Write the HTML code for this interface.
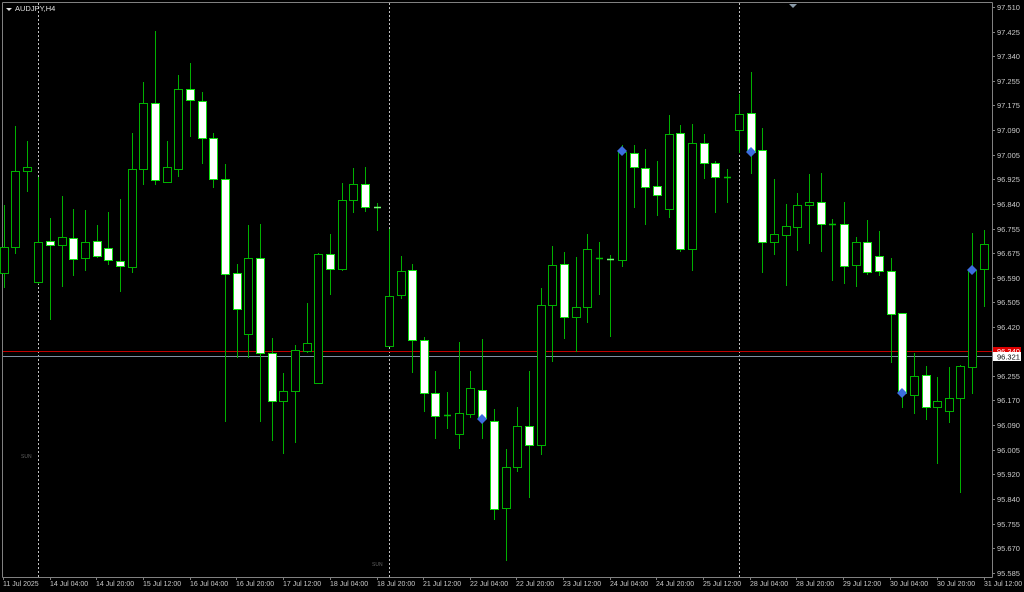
<!DOCTYPE html>
<html><head><meta charset="utf-8"><style>
html,body{margin:0;padding:0;background:#000;width:1024px;height:592px;overflow:hidden}
svg{display:block}
text{font-family:"Liberation Sans",sans-serif;font-size:7.5px;fill:#c8c8c8}
#bt text{font-size:7px}
</style></head><body>
<svg id="s" width="1024" height="592" xmlns="http://www.w3.org/2000/svg">
<rect width="1024" height="592" fill="#000"/>
<g stroke="#808080" stroke-width="1" fill="none">
<line x1="2.5" y1="2.5" x2="992.5" y2="2.5"/>
<line x1="2.5" y1="2.5" x2="2.5" y2="577.5"/>
<line x1="992.5" y1="2.5" x2="992.5" y2="577.5"/>
<line x1="2.5" y1="577.5" x2="992.5" y2="577.5"/>
</g>
<g stroke="#c0c0c0" stroke-width="1" stroke-dasharray="2,2">
<line x1="38.5" y1="3" x2="38.5" y2="577"/>
<line x1="389.5" y1="3" x2="389.5" y2="577"/>
<line x1="739.5" y1="3" x2="739.5" y2="577"/>
</g>
<line x1="3" y1="351.5" x2="992" y2="351.5" stroke="#c00000"/>
<line x1="3" y1="356.5" x2="992" y2="356.5" stroke="#8090a0"/>
<polygon points="789,4 797,4 793,8" fill="#8a9aa8"/>
<polygon points="6,8 12,8 9,11" fill="#e0e0e0"/>
<text x="15" y="11" style="font-size:7.5px;fill:#e0e0e0">AUDJPY,H4</text>
<text x="21" y="458" style="font-size:5px;fill:#606060">SUN</text>
<text x="372" y="566" style="font-size:5px;fill:#606060">SUN</text>
<g id="c"></g>
<g id="ax">
<text x="997" y="10">97.510</text>
<text x="997" y="35">97.425</text>
<text x="997" y="59">97.340</text>
<text x="997" y="84">97.255</text>
<text x="997" y="108">97.175</text>
<text x="997" y="133">97.090</text>
<text x="997" y="158">97.005</text>
<text x="997" y="182">96.925</text>
<text x="997" y="207">96.840</text>
<text x="997" y="232">96.755</text>
<text x="997" y="256">96.675</text>
<text x="997" y="281">96.590</text>
<text x="997" y="305">96.505</text>
<text x="997" y="330">96.420</text>
<text x="997" y="379">96.255</text>
<text x="997" y="403">96.170</text>
<text x="997" y="428">96.090</text>
<text x="997" y="453">96.005</text>
<text x="997" y="477">95.920</text>
<text x="997" y="502">95.840</text>
<text x="997" y="527">95.755</text>
<text x="997" y="551">95.670</text>
<text x="997" y="576">95.585</text>
</g>
<rect x="993" y="347" width="28" height="8" fill="#e00000"/>
<text x="997" y="354" style="fill:#ffffff">96.340</text>
<rect x="993" y="352" width="28" height="9" fill="#ffffff"/>
<text x="997" y="359.5" style="fill:#000">96.321</text>
<g stroke="#808080">
<line x1="992" y1="7.5" x2="995" y2="7.5"/><line x1="992" y1="32.5" x2="995" y2="32.5"/><line x1="992" y1="56.5" x2="995" y2="56.5"/><line x1="992" y1="81.5" x2="995" y2="81.5"/><line x1="992" y1="105.5" x2="995" y2="105.5"/><line x1="992" y1="130.5" x2="995" y2="130.5"/><line x1="992" y1="155.5" x2="995" y2="155.5"/><line x1="992" y1="179.5" x2="995" y2="179.5"/><line x1="992" y1="204.5" x2="995" y2="204.5"/><line x1="992" y1="229.5" x2="995" y2="229.5"/><line x1="992" y1="253.5" x2="995" y2="253.5"/><line x1="992" y1="278.5" x2="995" y2="278.5"/><line x1="992" y1="302.5" x2="995" y2="302.5"/><line x1="992" y1="327.5" x2="995" y2="327.5"/><line x1="992" y1="376.5" x2="995" y2="376.5"/><line x1="992" y1="400.5" x2="995" y2="400.5"/><line x1="992" y1="425.5" x2="995" y2="425.5"/><line x1="992" y1="450.5" x2="995" y2="450.5"/><line x1="992" y1="474.5" x2="995" y2="474.5"/><line x1="992" y1="499.5" x2="995" y2="499.5"/><line x1="992" y1="524.5" x2="995" y2="524.5"/><line x1="992" y1="548.5" x2="995" y2="548.5"/><line x1="992" y1="573.5" x2="995" y2="573.5"/>
</g>
<g id="bt">
<text x="3" y="586">11 Jul 2025</text>
<text x="50" y="586">14 Jul 04:00</text>
<text x="96" y="586">14 Jul 20:00</text>
<text x="143" y="586">15 Jul 12:00</text>
<text x="190" y="586">16 Jul 04:00</text>
<text x="236" y="586">16 Jul 20:00</text>
<text x="283" y="586">17 Jul 12:00</text>
<text x="330" y="586">18 Jul 04:00</text>
<text x="377" y="586">18 Jul 20:00</text>
<text x="423" y="586">21 Jul 12:00</text>
<text x="470" y="586">22 Jul 04:00</text>
<text x="516" y="586">22 Jul 20:00</text>
<text x="563" y="586">23 Jul 12:00</text>
<text x="610" y="586">24 Jul 04:00</text>
<text x="656" y="586">24 Jul 20:00</text>
<text x="703" y="586">25 Jul 12:00</text>
<text x="750" y="586">28 Jul 04:00</text>
<text x="796" y="586">28 Jul 20:00</text>
<text x="843" y="586">29 Jul 12:00</text>
<text x="890" y="586">30 Jul 04:00</text>
<text x="937" y="586">30 Jul 20:00</text>
<text x="984" y="586">31 Jul 12:00</text>
</g>
<g stroke="#808080">
<line x1="3.5" y1="577" x2="3.5" y2="580"/><line x1="50.5" y1="577" x2="50.5" y2="580"/><line x1="96.5" y1="577" x2="96.5" y2="580"/><line x1="143.5" y1="577" x2="143.5" y2="580"/><line x1="190.5" y1="577" x2="190.5" y2="580"/><line x1="236.5" y1="577" x2="236.5" y2="580"/><line x1="283.5" y1="577" x2="283.5" y2="580"/><line x1="330.5" y1="577" x2="330.5" y2="580"/><line x1="377.5" y1="577" x2="377.5" y2="580"/><line x1="423.5" y1="577" x2="423.5" y2="580"/><line x1="470.5" y1="577" x2="470.5" y2="580"/><line x1="516.5" y1="577" x2="516.5" y2="580"/><line x1="563.5" y1="577" x2="563.5" y2="580"/><line x1="610.5" y1="577" x2="610.5" y2="580"/><line x1="656.5" y1="577" x2="656.5" y2="580"/><line x1="703.5" y1="577" x2="703.5" y2="580"/><line x1="750.5" y1="577" x2="750.5" y2="580"/><line x1="796.5" y1="577" x2="796.5" y2="580"/><line x1="843.5" y1="577" x2="843.5" y2="580"/><line x1="890.5" y1="577" x2="890.5" y2="580"/><line x1="937.5" y1="577" x2="937.5" y2="580"/><line x1="984.5" y1="577" x2="984.5" y2="580"/>
</g>
</svg>
<script>
var d=[[4,205,288,247,273,0],[15,126,254,171,247,0],[27,141,192,167,171,0],[38,177,284,242,282,0],[50,218,320,241,245,1],[62,196,287,237,245,0],[73,209,276,238,259,1],[85,210,271,242,258,0],[97,225,258,241,256,1],[108,212,265,248,260,1],[120,199,292,261,266,1],[132,133,273,169,267,0],[143,82,185,103,169,0],[155,31,185,103,180,1],[167,141,182,167,182,0],[178,75,177,89,169,0],[190,63,137,89,100,1],[202,92,164,101,138,1],[213,133,188,138,179,1],[225,164,422,179,274,1],[237,264,358,273,309,1],[248,225,358,258,334,0],[260,224,422,258,353,1],[272,338,441,353,401,1],[283,373,454,391,401,0],[295,345,443,350,391,0],[307,303,353,343,351,0],[318,253,384,254,383,0],[330,234,295,254,269,1],[342,183,271,200,269,0],[353,168,213,184,200,0],[365,167,212,184,207,1],[377,203,231,207,207,1],[389,229,347,296,346,0],[401,256,299,271,295,0],[412,264,373,270,340,1],[424,337,412,340,393,1],[435,371,439,393,416,1],[447,392,429,415,415,0],[459,342,449,413,434,0],[470,371,418,388,414,0],[482,339,439,390,418,1],[494,409,520,421,509,1],[506,449,561,467,508,0],[517,407,472,426,467,0],[529,371,498,426,445,1],[541,288,455,305,445,0],[552,246,362,265,305,0],[564,252,339,264,317,1],[576,257,352,307,317,0],[587,234,323,249,307,0],[599,242,295,258,258,0],[610,255,337,259,259,1],[622,145,267,152,260,0],[634,145,208,153,167,1],[645,149,225,168,187,1],[657,161,216,186,195,1],[669,115,218,134,209,0],[680,125,252,133,249,1],[692,124,271,143,249,0],[704,134,179,143,163,1],[715,161,213,163,177,1],[727,169,203,177,177,0],[739,94,153,114,130,0],[751,72,174,113,152,1],[762,128,273,150,242,1],[774,179,255,234,242,0],[786,204,286,226,235,0],[797,193,251,205,227,0],[809,174,244,202,205,0],[821,173,252,202,224,1],[832,219,281,224,224,0],[844,202,284,224,266,1],[856,237,287,242,265,0],[867,220,275,242,272,1],[879,231,276,256,271,1],[891,258,363,271,314,1],[902,313,408,313,393,1],[914,353,414,376,395,0],[926,366,420,375,407,1],[937,377,464,401,407,0],[949,367,423,398,411,0],[960,365,493,366,398,0],[972,233,394,270,367,0],[984,230,307,244,269,0]];
var g=document.getElementById('c'),h='';
d.forEach(function(c){var x=c[0];
h+='<line x1="'+(x+.5)+'" y1="'+c[1]+'" x2="'+(x+.5)+'" y2="'+c[2]+'" stroke="#00b000"/>';
if(c[3]==c[4]){h+='<line x1="'+(x-3)+'" y1="'+(c[3]+.5)+'" x2="'+(x+4)+'" y2="'+(c[3]+.5)+'" stroke="'+(c[5]?'#70ff70':'#00c000')+'" stroke-width="1.5"/>';}
else{h+='<rect x="'+(x-3.5)+'" y="'+(c[3]+.5)+'" width="8" height="'+(c[4]-c[3])+'" fill="'+(c[5]?'#ffffff':'#000')+'" stroke="'+(c[5]?'#10e010':'#00b000')+'" stroke-width="1"/>';}
});
[[482,419],[622,151],[751,152],[902,393],[972,270]].forEach(function(p){h+='<polygon points="'+p[0]+','+(p[1]-5)+' '+(p[0]+5)+','+p[1]+' '+p[0]+','+(p[1]+5)+' '+(p[0]-5)+','+p[1]+'" fill="#3c6ee0"/>';});
g.innerHTML=h;
</script>
</body></html>
